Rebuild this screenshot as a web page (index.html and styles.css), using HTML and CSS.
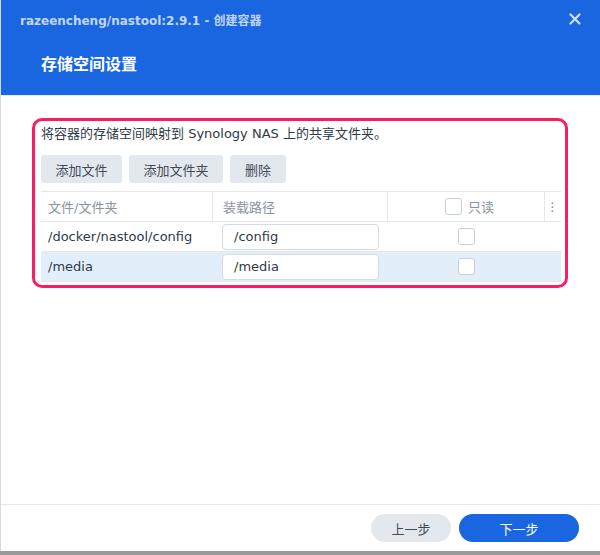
FILE: index.html
```html
<!DOCTYPE html>
<html>
<head>
<meta charset="utf-8">
<link rel="stylesheet" href="styles.css">
</head>
<body>
<div class="dialog">
  <div class="header">
    <div class="titlebar">
      <span class="title">razeencheng/nastool:2.9.1 - 创建容器</span>
      <svg class="close" width="12" height="12" viewBox="0 0 12 12"><path d="M1.5 1.5 L10.5 10.5 M10.5 1.5 L1.5 10.5" stroke="#cfe0fb" stroke-width="2.2" stroke-linecap="round"/></svg>
    </div>
    <div class="subtitle">存储空间设置</div>
  </div>
  <div class="body">
    <div class="box">
      <div class="desc">将容器的存储空间映射到 Synology NAS 上的共享文件夹。</div>
      <div class="toolbar">
        <button class="btn w1">添加文件</button>
        <button class="btn w2">添加文件夹</button>
        <button class="btn w3">删除</button>
      </div>
      <div class="table">
        <div class="row head">
          <div class="cell c1">文件/文件夹</div>
          <div class="cell c2">装载路径</div>
          <div class="cell c3"><span class="check"></span><span class="ro">只读</span></div>
          <div class="cell c4"><span class="dots">⋮</span></div>
        </div>
        <div class="row">
          <div class="cell c1">/docker/nastool/config</div>
          <div class="cell c2"><div class="input">/config</div></div>
          <div class="cell c3"><span class="check"></span></div>
          <div class="cell c4"></div>
        </div>
        <div class="row sel">
          <div class="cell c1">/media</div>
          <div class="cell c2"><div class="input">/media</div></div>
          <div class="cell c3"><span class="check"></span></div>
          <div class="cell c4"></div>
        </div>
      </div>
    </div>
  </div>
  <div class="footer">
    <button class="pill prev">上一步</button>
    <button class="pill next">下一步</button>
  </div>
</div>
</body>
</html>
```

FILE: styles.css
```css
html, body {
  margin: 0;
  padding: 0;
  background: #9a9a9a;
  width: 600px;
  height: 555px;
  overflow: hidden;
  font-family: "DejaVu Sans", "Noto Sans CJK SC", sans-serif;
}
.dialog {
  width: 600px;
  height: 551px;
  background: #fff;
  display: flex;
  flex-direction: column;
  box-sizing: border-box;
  border-left: 1px solid #d6d9dd;
}
.header {
  background: #1966e0;
  height: 95px;
  flex: none;
  border-bottom: 1px solid #e3e8ee;
  box-sizing: content-box;
}
.titlebar {
  height: 38px;
  display: flex;
  align-items: center;
  justify-content: space-between;
  padding: 0 19px 0 19px;
}
.title {
  color: #c3d6f6;
  font-weight: bold;
  font-size: 12px;
}
.close { display: block; }
.subtitle {
  margin-top: 15px;
  padding-left: 40px;
  color: #fff;
  font-size: 16px;
  font-weight: bold;
  line-height: 24px;
}
.body {
  flex: 1;
  padding: 22px 32px 0 31px;
}
.box {
  border: 3px solid #fb1d62;
  border-radius: 10px;
  height: 170px;
  box-sizing: border-box;
  padding: 3px 4px 0 6px;
}
.desc {
  font-size: 13px;
  line-height: 20px;
  color: #2f3a45;
}
.toolbar {
  display: flex;
  gap: 7px;
  margin-top: 11px;
}
.btn {
  height: 28px;
  border: none;
  border-radius: 3px;
  background: #e3e8ef;
  color: #414b56;
  font-family: inherit;
  font-size: 13px;
  padding: 0;
}
.w1 { width: 81px; }
.w2 { width: 94px; }
.w3 { width: 56px; }
.table {
  margin-top: 8px;
  border-top: 1px solid #e3e8ee;
}
.row {
  display: flex;
  height: 29px;
  border-bottom: 1px solid #e3e8ee;
  align-items: center;
  font-size: 13px;
  color: #2f3a45;
}
.row.head { color: #8a939d; }
.row.sel { background: #e3eefb; }
.cell {
  height: 100%;
  display: flex;
  align-items: center;
  box-sizing: border-box;
}
.c1 { width: 172px; padding-left: 7px; }
.c2 { width: 175px; padding-left: 9px; }
.c3 { width: 157px; justify-content: center; }
.c4 { width: 15px; justify-content: center; }
.head .c1, .head .c2, .head .c3 { border-right: 1px solid #e3e8ee; }
.head .c2 { padding-left: 10px; }
.input {
  width: 157px;
  height: 26px;
  box-sizing: border-box;
  border: 1px solid #d3dbe5;
  border-radius: 4px;
  background: #fff;
  display: flex;
  align-items: center;
  padding-left: 11px;
  font-size: 13px;
}
.check {
  width: 17px;
  height: 17px;
  box-sizing: border-box;
  border: 1px solid #c5cfdc;
  border-radius: 3px;
  background: #fff;
  display: inline-block;
}
.ro { margin-left: 6px; }
.head .c3 { justify-content: flex-start; padding-left: 57px; }
.dots {
  font-size: 12px;
  color: #6b747e;
}
.footer {
  flex: none;
  height: 47px;
  box-sizing: border-box;
  border-top: 1px solid #e3e8ee;
  display: flex;
  justify-content: flex-end;
  align-items: flex-start;
  padding: 9px 21px 0 0;
  gap: 8px;
}
.pill {
  height: 28px;
  border: none;
  border-radius: 14px;
  font-family: inherit;
  font-size: 13px;
  padding: 0;
}
.prev { width: 80px; background: #e3e8ef; color: #414b56; }
.next { width: 120px; background: #1966e0; color: #fff; }
```
